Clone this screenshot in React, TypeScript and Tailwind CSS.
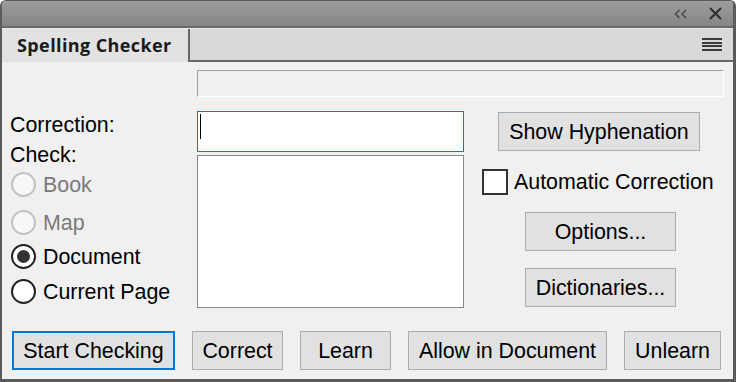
import React from "react";

function Btn({ children, className = "" }: { children: React.ReactNode; className?: string }) {
  return (
    <button
      className={`h-[39px] pt-[2px] bg-[#e1e1e1] text-[21.4px] leading-none text-black flex items-center justify-center ${className}`}
    >
      {children}
    </button>
  );
}

function Radio({ label, checked = false, disabled = false, className = "" }: { label: string; checked?: boolean; disabled?: boolean; className?: string }) {
  return (
    <div className={`flex items-center h-[25px] ${className}`}>
      <span
        className={`ml-px w-[25px] h-[25px] rounded-full border-2 flex items-center justify-center ${
          disabled ? "border-[#c2c2c2] bg-[#f7f7f7]" : "border-[#222] bg-white"
        }`}
      >
        {checked && <span className="w-[13px] h-[13px] rounded-full bg-[#333]" />}
      </span>
      <span className={`ml-[7px] text-[21.4px] leading-[24px] ${disabled ? "text-[#7a7a7a]" : "text-black"}`}>{label}</span>
    </div>
  );
}

export default function App() {
  return (
    <div className="w-[736px] h-[382px] bg-white font-['Liberation_Sans',Arial,sans-serif]">
      <div className="w-[736px] h-[382px] flex flex-col border-t border-l-2 border-r-[3px] border-b-[3px] border-[#5a5a5a] rounded-t-[6px] overflow-hidden bg-[#f0f0f0]">
        {/* title bar */}
        <div className="h-[27px] shrink-0 bg-gradient-to-b from-[#9c9c9c] to-[#868686] border-b-2 border-[#686868] flex items-center justify-end pr-[11px]">
          <svg width="14" height="10" viewBox="0 0 14 10" className="mr-[21px]">
            <path d="M5.5 1 L1.5 5 L5.5 9 M12 1 L8 5 L12 9" fill="none" stroke="#4a4a4a" strokeWidth="1.6" />
          </svg>
          <svg width="13" height="13" viewBox="0 0 13 13">
            <path d="M1 1 L12 12 M12 1 L1 12" stroke="#2e2e2e" strokeWidth="2" />
          </svg>
        </div>

        {/* tab strip */}
        <div className="h-[34px] shrink-0 flex border-t border-[#e9e9e9]">
          <div className="w-[188px] shrink-0 bg-[#e2e2e2] border-r-2 border-[#666] flex items-center pl-[15px]">
            <span className="font-['Open_Sans',sans-serif] font-bold text-[18px] text-[#1a1a1a] tracking-[0.4px]">Spelling Checker</span>
          </div>
          <div className="flex-1 bg-[#d9d9d9] border-b-2 border-[#666] flex items-center justify-end pr-[11px]">
            <div className="flex flex-col gap-[1.5px] w-[20px]">
              <span className="h-[2px] bg-[#3c3c3c]" />
              <span className="h-[2px] bg-[#3c3c3c]" />
              <span className="h-[2px] bg-[#3c3c3c]" />
              <span className="h-[2px] bg-[#3c3c3c]" />
            </div>
          </div>
        </div>

        {/* body */}
        <div className="flex-1 flex flex-col">
          <div className="mt-[8px] ml-[195px] w-[527px] h-[27px] border-t border-l border-[#a0a0a0] border-b border-r border-b-white border-r-white" />

          <div className="mt-[14px] flex">
            {/* labels + radios */}
            <div className="w-[195px] pl-[8px] flex flex-col">
              <div className="mt-[2px] h-[30px] text-[21.4px] leading-[24px] text-black">Correction:</div>
              <div className="h-[29px] text-[21.4px] leading-[24px] text-black">Check:</div>
              <Radio label="Book" disabled />
              <Radio label="Map" disabled className="mt-[13px]" />
              <Radio label="Document" checked className="mt-[9px]" />
              <Radio label="Current Page" className="mt-[10px]" />
            </div>

            {/* correction field + list */}
            <div className="w-[267px] flex flex-col">
              <div className="h-[41px] bg-white border border-[#0078d7] pl-[2px] pt-[2px]">
                <div className="w-px h-[25px] bg-black" />
              </div>
              <div className="mt-[3px] h-[153px] bg-white border border-[#828790]" />
            </div>

            {/* right column */}
            <div className="flex-1 flex flex-col items-start">
              <Btn className="mt-px ml-[34px] w-[202px] border border-[#adadad]">Show Hyphenation</Btn>
              <div className="mt-[18px] ml-[18px] flex items-center">
                <span className="w-[26px] h-[26px] bg-white border-2 border-[#333]" />
                <span className="ml-[6px] text-[21.4px] leading-[24px] text-black">Automatic Correction</span>
              </div>
              <Btn className="mt-[17px] ml-[61px] w-[151px] border border-[#adadad]">Options...</Btn>
              <Btn className="mt-[17px] ml-[61px] w-[151px] border border-[#adadad]">Dictionaries...</Btn>
            </div>
          </div>

          <div className="mt-[23px] pl-[10px] flex gap-[17px]">
            <Btn className="w-[163px] border-2 border-[#0078d7]">Start Checking</Btn>
            <Btn className="w-[91px] border border-[#adadad]">Correct</Btn>
            <Btn className="w-[91px] border border-[#adadad]">Learn</Btn>
            <Btn className="w-[199px] border border-[#adadad]">Allow in Document</Btn>
            <Btn className="w-[97px] border border-[#adadad]">Unlearn</Btn>
          </div>
        </div>
      </div>
    </div>
  );
}
